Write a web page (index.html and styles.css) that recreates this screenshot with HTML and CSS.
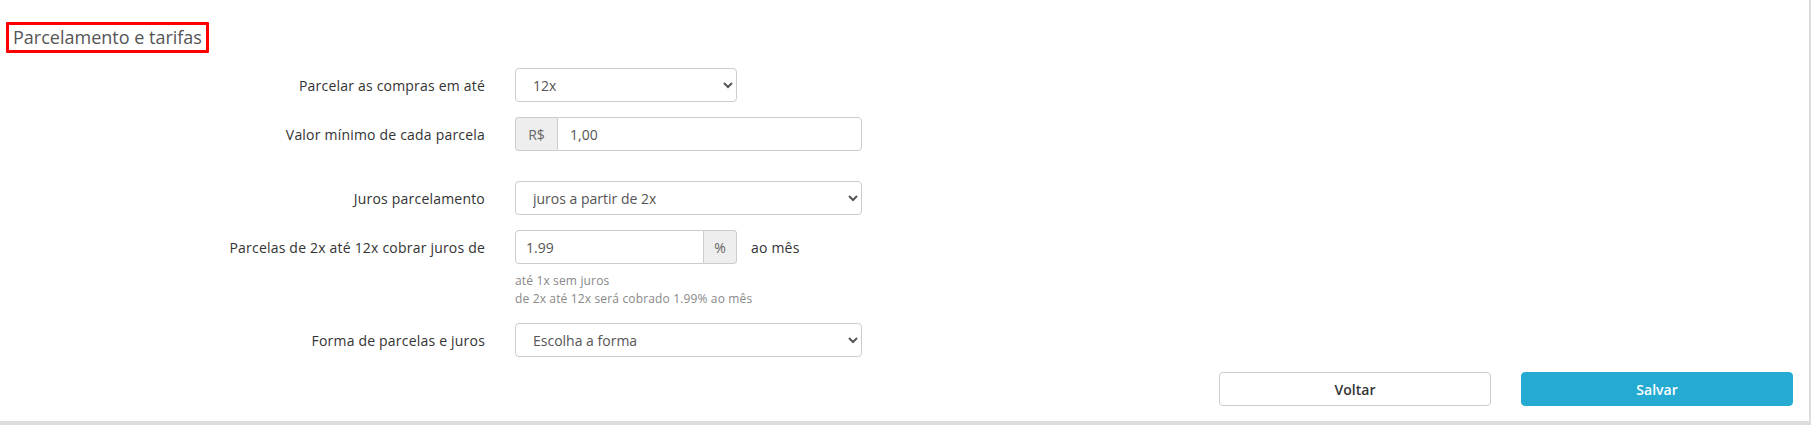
FILE: index.html
```html
<!DOCTYPE html>
<html lang="pt-BR">
<head>
<meta charset="utf-8">
<title>Parcelamento e tarifas</title>
<link rel="stylesheet" href="styles.css">
</head>
<body>
<div class="card">
  <h2 class="title">Parcelamento e tarifas</h2>
  <form class="form">
    <div class="row">
      <label class="label">Parcelar as compras em até</label>
      <select class="control w-sm"><option>12x</option></select>
    </div>
    <div class="row row-gap-lg">
      <label class="label">Valor mínimo de cada parcela</label>
      <div class="group w-lg">
        <span class="addon addon-left">R$</span>
        <input class="input" type="text" value="1,00">
      </div>
    </div>
    <div class="row">
      <label class="label">Juros parcelamento</label>
      <select class="control w-lg"><option>juros a partir de 2x</option></select>
    </div>
    <div class="row row-help">
      <label class="label">Parcelas de 2x até 12x cobrar juros de</label>
      <div class="group w-sm">
        <input class="input input-left" type="text" value="1.99">
        <span class="addon addon-right">%</span>
      </div>
      <span class="suffix">ao mês</span>
    </div>
    <div class="help">
      <div>até 1x sem juros</div>
      <div>de 2x até 12x será cobrado 1.99% ao mês</div>
    </div>
    <div class="row">
      <label class="label">Forma de parcelas e juros</label>
      <select class="control w-lg"><option>Escolha a forma</option></select>
    </div>
    <div class="actions">
      <button type="button" class="btn btn-default">Voltar</button>
      <button type="button" class="btn btn-primary">Salvar</button>
    </div>
  </form>
</div>
</body>
</html>
```
FILE: styles.css
```css
* { box-sizing: border-box; }
html, body { margin: 0; padding: 0; background: #fff; }
body { font-family: "Open Sans", "Noto Sans", sans-serif; color: #333; font-size: 14px; }

.card {
  height: 425px;
  border-right: 2px solid #ddd;
  border-bottom: 4px solid #ddd;
  background: #fff;
  padding: 22px 16px 0 6px;
}

.title {
  display: inline-block;
  margin: 0;
  border: 3px solid #f00;
  border-radius: 1px;
  padding: 0 4px 0 4px;
  height: 31px;
  line-height: 24px;
  font-size: 18px;
  font-weight: 400;
  color: #555;
}

.form { margin-top: 15px; }

.row {
  display: flex;
  align-items: center;
  margin-bottom: 15px;
}
.row-gap-lg { margin-bottom: 30px; }
.row-help { margin-bottom: 8px; }

.label {
  width: 479px;
  margin-right: 30px;
  text-align: right;
  font-size: 14px;
  letter-spacing: 0.2px;
  color: #333;
}

.control {
  height: 34px;
  border: 1px solid #ccc;
  border-radius: 4px;
  background: #fff;
  font-family: inherit;
  font-size: 14px;
  color: #555;
  padding: 0 6px 0 13px;
}
.w-sm { width: 222px; }
.w-lg { width: 347px; }

.group {
  display: flex;
  height: 34px;
}
.input {
  flex: 1;
  min-width: 0;
  height: 34px;
  border: 1px solid #ccc;
  border-radius: 0 4px 4px 0;
  padding: 0 12px;
  font-family: inherit;
  font-size: 14px;
  color: #555;
  background: #fff;
}
.input-left { border-radius: 4px 0 0 4px; padding-left: 10px; }
.addon {
  display: flex;
  align-items: center;
  justify-content: center;
  width: 42px;
  background: #eee;
  border: 1px solid #ccc;
  color: #666;
  font-size: 14px;
}
.addon-left { border-radius: 4px 0 0 4px; border-right: 0; }
.addon-right { width: 33px; border-radius: 0 4px 4px 0; border-left: 0; }

.suffix { margin-left: 14px; font-size: 14px; letter-spacing: 0.2px; color: #333; }

.help {
  margin-left: 509px;
  font-size: 12px;
  line-height: 18px;
  letter-spacing: 0.15px;
  color: #888;
  margin-bottom: 15px;
}

.actions {
  display: flex;
  justify-content: flex-end;
  gap: 30px;
}
.btn {
  width: 272px;
  height: 34px;
  border-radius: 4px;
  font-family: inherit;
  font-size: 14px;
  font-weight: 600;
  cursor: pointer;
}
.btn-default { background: #fff; border: 1px solid #ccc; color: #333; }
.btn-primary { background: #25aad2; border: 1px solid #25aad2; color: #fff; }
```
